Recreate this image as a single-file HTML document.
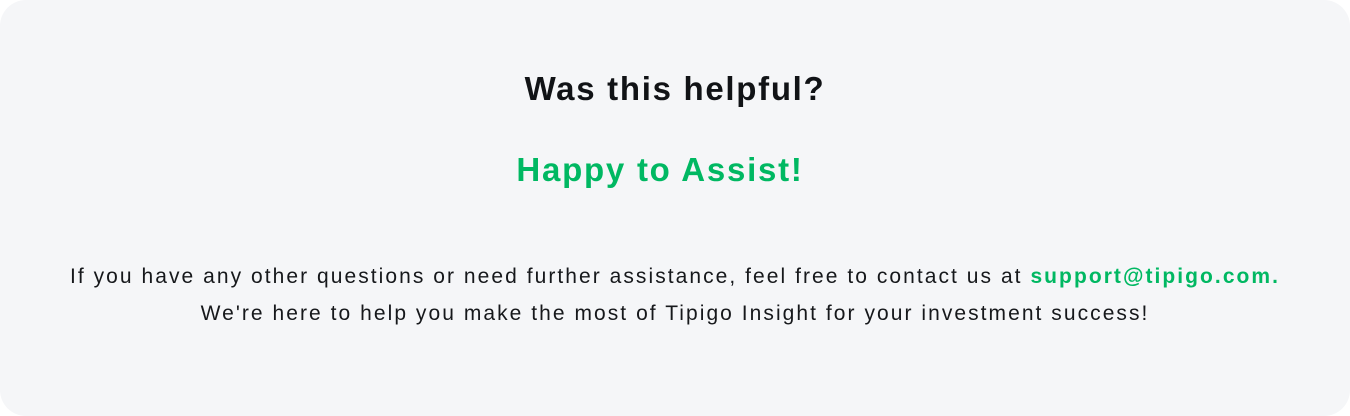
<!DOCTYPE html>
<html><head><meta charset="utf-8"><style>
html,body{margin:0;padding:0;background:#fff;width:1350px;height:416px;overflow:hidden}
.card{position:absolute;left:0;top:0;width:1350px;height:416px;background:#f5f6f8;border-radius:26px;font-family:"Liberation Sans",sans-serif;text-align:center;color:#16181b}
h1{position:absolute;left:0;right:0;top:68px;margin:0;font-size:33px;font-weight:bold;line-height:42px;color:#111316;letter-spacing:1.7px}
h2{position:absolute;left:-30px;right:0;top:149px;margin:0;font-size:33px;font-weight:bold;line-height:42px;color:#00b862;letter-spacing:1.75px}
p{position:absolute;left:-10px;right:-10px;top:258px;margin:0;font-size:21px;line-height:37px;letter-spacing:2.05px}
b{color:#00b862}
</style></head><body><div class="card">
<h1>Was this helpful?</h1>
<h2>Happy to Assist!</h2>
<p>If you have any other questions or need further assistance, feel free to contact us at <b>support@tipigo.com.</b><br>We're here to help you make the most of Tipigo Insight for your investment success!</p>
</div></body></html>
